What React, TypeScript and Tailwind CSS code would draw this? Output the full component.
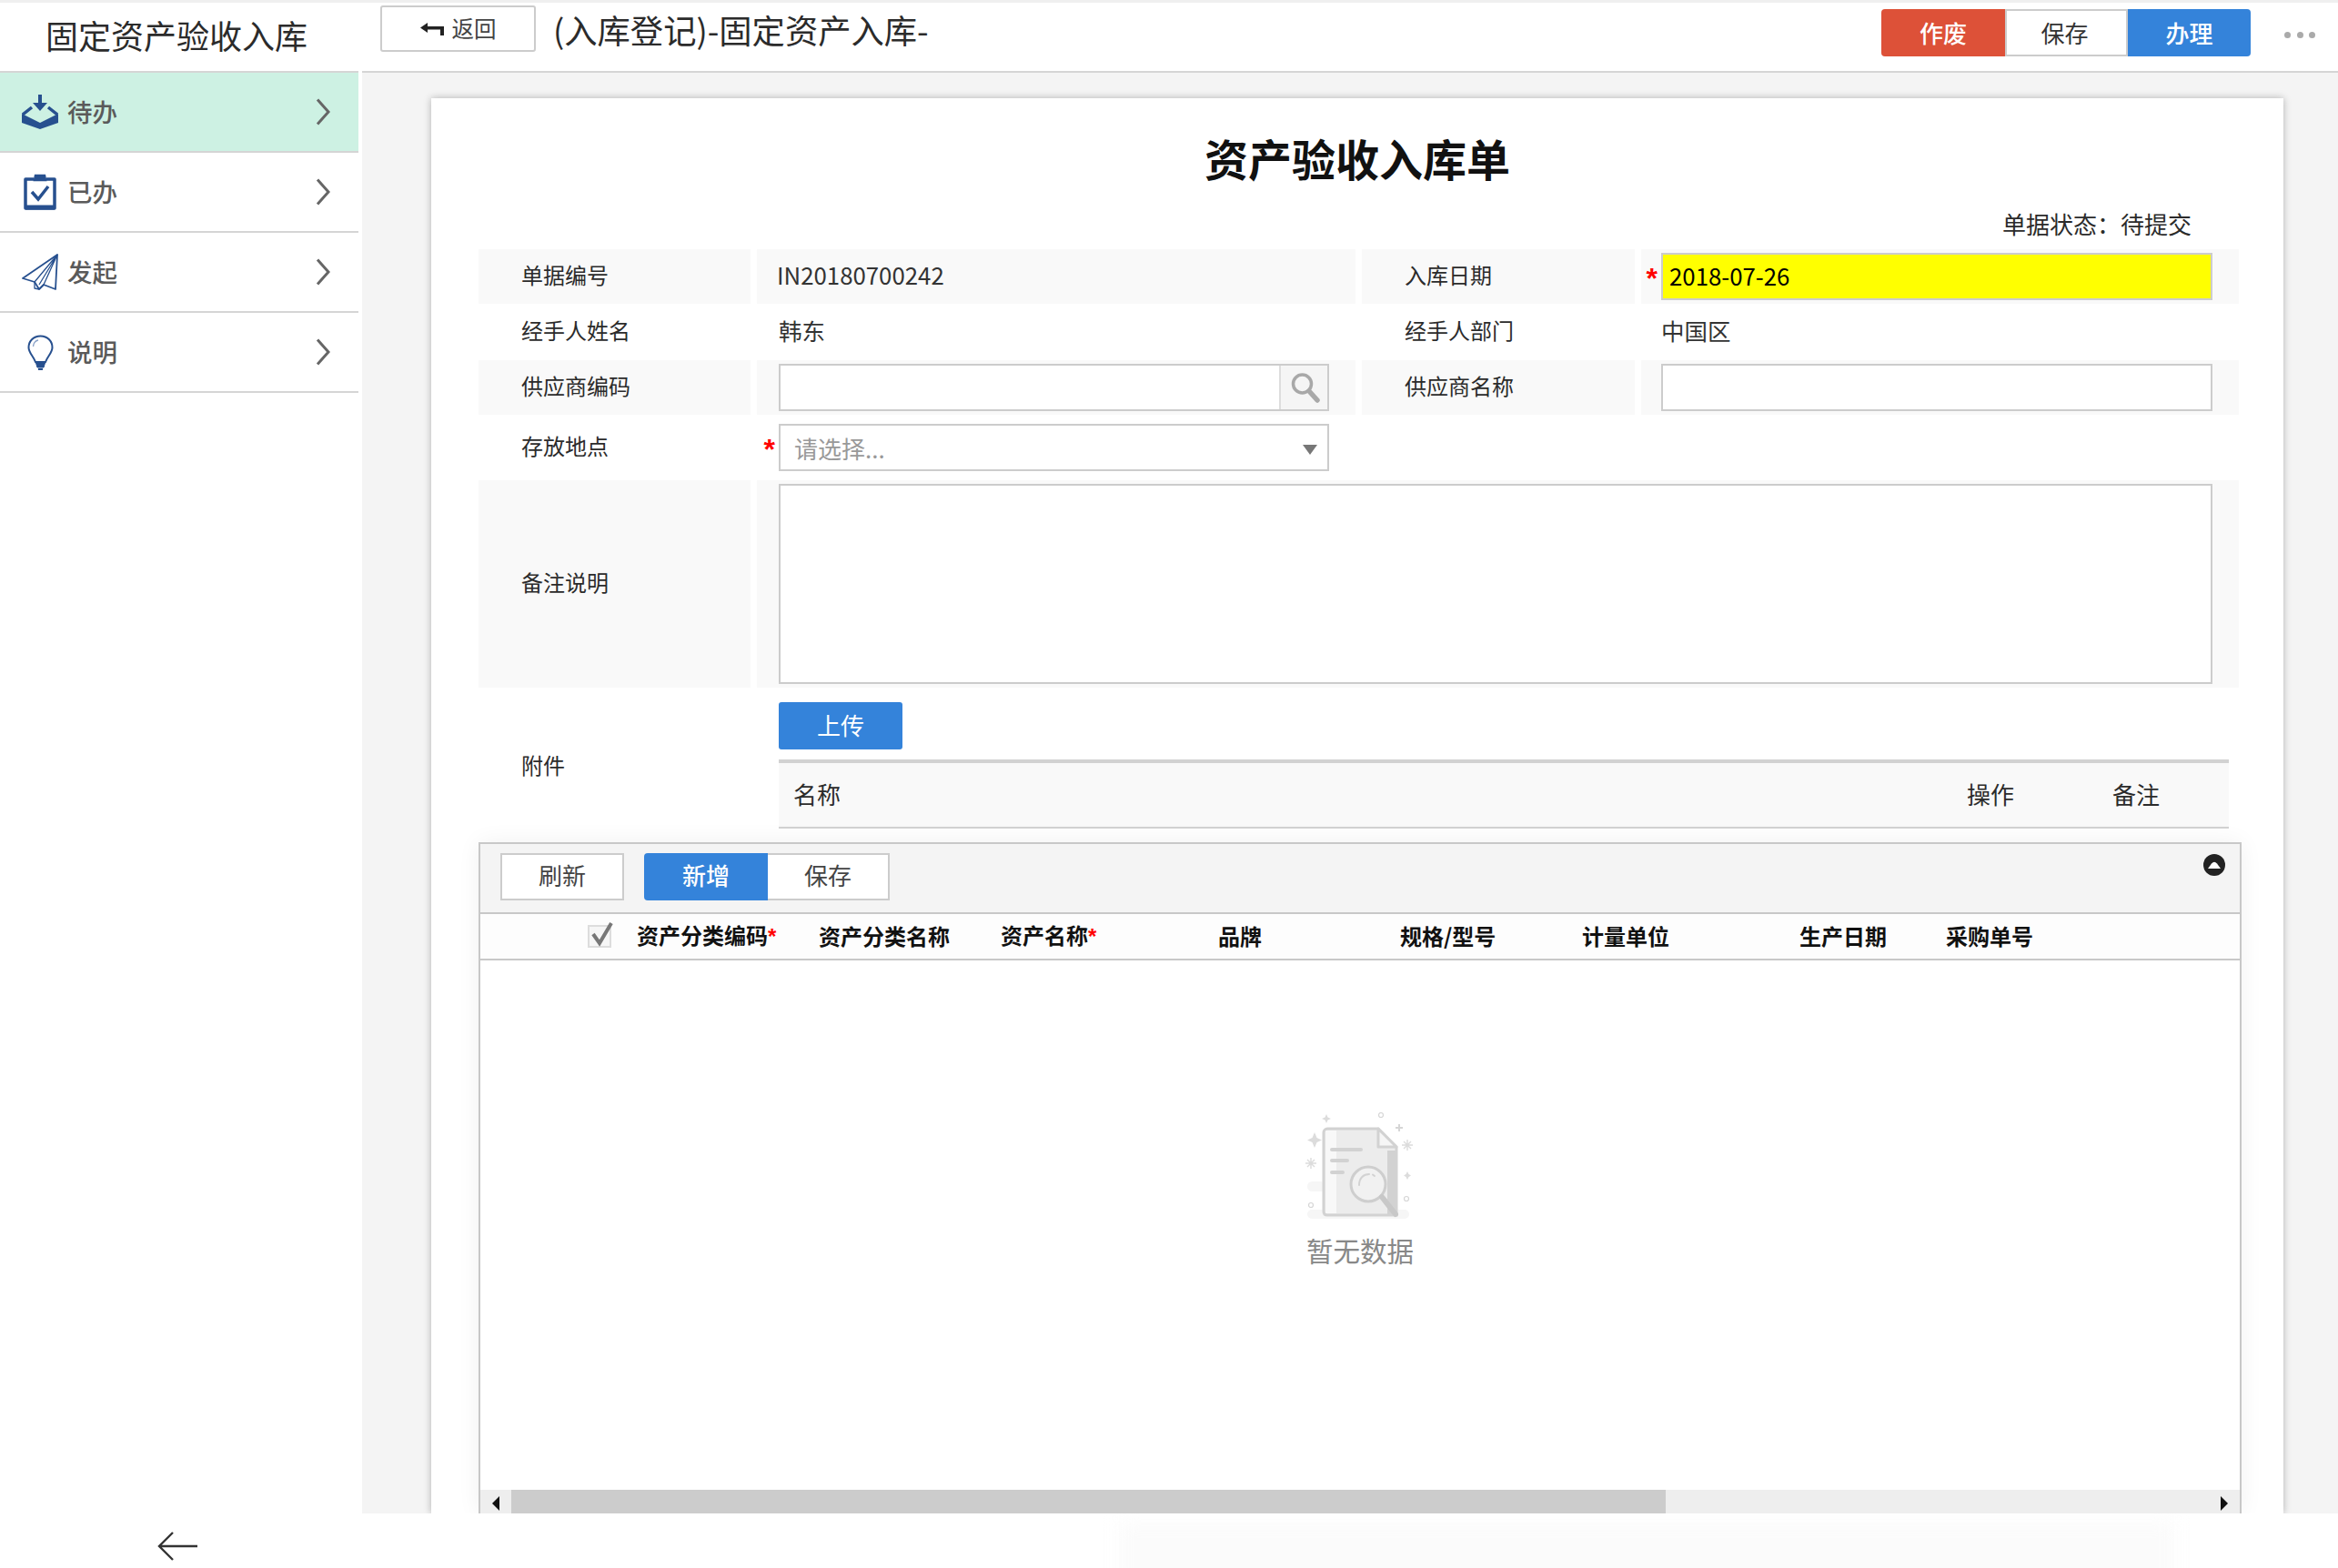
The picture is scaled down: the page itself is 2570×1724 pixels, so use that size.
import React from "react";

const BLUE = "#27508f";

const Chevron = () => (
  <svg width="16" height="30" viewBox="0 0 16 30" fill="none" className="ml-auto mr-[31px]">
    <polyline points="2,1.500 14,15 2,28.500" stroke="#666" strokeWidth="3" />
  </svg>
);

const InboxIcon = () => (
  <svg width="40" height="38" viewBox="0 0 40 38" fill="none">
    <path d="M18 0h4v9h6l-8 9-8-9h6z" fill={BLUE} />
    <path d="M0 21L20 31L40 21V31L20 38L0 31Z" fill={BLUE} />
    <path d="M1 22L11 14M39 22L29 14" stroke={BLUE} strokeWidth="3.500" />
  </svg>
);
const ClipIcon = () => (
  <svg width="36" height="40" viewBox="0 0 36 40" fill="none">
    <path d="M11 6H2V38H34V6H25" stroke={BLUE} strokeWidth="3.500" strokeLinejoin="round" />
    <path d="M2 37H34" stroke={BLUE} strokeWidth="5" />
    <path d="M12 7L13 2H23L24 7Z" fill={BLUE} stroke={BLUE} strokeWidth="2.500" />
    <path d="M9 20L16 28L27 14" stroke={BLUE} strokeWidth="3.500" />
  </svg>
);
const PlaneIcon = () => (
  <svg width="40" height="40" viewBox="0 0 40 40" fill="none" stroke={BLUE} strokeWidth="1.800" strokeLinejoin="round">
    <path d="M39 1L1 27L14 31L19 39L24 34L37 39Z" />
    <path d="M39 1L14 31L14 38L19 39M39 1L24 34M39 1L19 34M24 34L19 39" strokeWidth="1.300" />
  </svg>
);
const BulbIcon = () => (
  <svg width="29" height="39" viewBox="0 0 29 39" fill="none" stroke={BLUE}>
    <path d="M14.500 1.500C6.500 1.500 1.500 7.500 1.500 14C1.500 20 6.500 23 9 30H20C22.500 23 27.500 20 27.500 14C27.500 7.500 22.500 1.500 14.500 1.500Z" strokeWidth="2" />
    <path d="M6.500 13C6.500 9.500 9 6.500 12 6" strokeWidth="1.400" stroke="#8aa2c8" />
    <path d="M9.500 31H19.500L18 36H11Z" fill={BLUE} strokeWidth="1" />
    <path d="M12 38H17" strokeWidth="2" />
  </svg>
);

const MENU = [
  { label: "待办", icon: <InboxIcon /> },
  { label: "已办", icon: <ClipIcon /> },
  { label: "发起", icon: <PlaneIcon /> },
  { label: "说明", icon: <BulbIcon /> },
];

const Label = ({ children, shaded }: { children: React.ReactNode; shaded?: boolean }) => (
  <div className={`flex items-center pl-[47px] pb-[4px] text-[24px] text-[#2b2b2b] ${shaded ? "bg-[#f9f9f9]" : ""}`}>{children}</div>
);

const Star = ({ show, wide }: { show?: boolean; wide?: boolean }) => (
  <span className={`shrink-0 text-right text-[32px] leading-none h-[24px] -mt-[5px] font-bold text-[#f00] font-['Liberation_Sans',sans-serif] ${wide ? "w-[24px] pr-[4px]" : "w-[22px] pr-[4px]"}`}>
    {show ? "*" : ""}
  </span>
);

const EmptyIcon = () => (
  <svg width="120" height="120" viewBox="0 0 120 120" fill="none">
    <rect x="2" y="107" width="112" height="10" rx="5" fill="#f6f6f6" />
    <rect x="2" y="76" width="20" height="11" rx="5.500" fill="#f6f6f6" />
    <path d="M24 18H80L100 38V113H24C21 113 20 111 20 109V22C20 20 22 18 24 18Z" fill="#ececec" stroke="#d2d2d2" strokeWidth="3" />
    <path d="M22 20H34V111H22Z" fill="#f8f8f8" />
    <path d="M90 42H99V112H90Z" fill="#d2d2d2" />
    <path d="M80 18V38H100Z" fill="#f6f6f6" stroke="#d2d2d2" strokeWidth="3" strokeLinejoin="round" />
    <rect x="27" y="39" width="36" height="4" rx="2" fill="#d2d2d2" />
    <rect x="27" y="51" width="21" height="4" rx="2" fill="#d2d2d2" />
    <rect x="27" y="64" width="16" height="4" rx="2" fill="#d2d2d2" />
    <circle cx="69" cy="79" r="19" fill="#f1f1f1" stroke="#cecece" strokeWidth="3" />
    <path d="M59 80C59 72 64 68 70 68M74 68.500L76 70" stroke="#d2d2d2" strokeWidth="2" strokeLinecap="round" />
    <path d="M84 93L99 112" stroke="#c8c8c8" strokeWidth="6" strokeLinecap="round" />
    <path d="M8 22L10.500 28L16 30.500L10.500 33L8 39L5.500 33L0 30.500L5.500 28Z" transform="translate(2 0)" fill="#dcdcdc" />
    <path d="M23 2L24.500 5.500L28 7L24.500 8.500L23 12L21.500 8.500L18 7L21.500 5.500Z" fill="#dcdcdc" />
    <path d="M103 13V21M99 17H107" stroke="#d6d6d6" strokeWidth="2" />
    <path d="M112 65L113.500 68L116 69.500L113.500 71L112 74L110.500 71L108 69.500L110.500 68Z" fill="#dcdcdc" />
    <path d="M112 30V42M106 36H118M108 32L116 40M116 32L108 40" stroke="#dcdcdc" strokeWidth="1.400" />
    <path d="M6 50V62M0 56H12M2 52L10 60M10 52L2 60" stroke="#dcdcdc" strokeWidth="1.400" />
    <circle cx="83" cy="3" r="2.500" stroke="#d6d6d6" strokeWidth="1.200" />
    <circle cx="111" cy="95" r="2.500" stroke="#d6d6d6" strokeWidth="1.200" />
    <circle cx="6" cy="102" r="2.500" stroke="#d6d6d6" strokeWidth="1.200" />
  </svg>
);

const COLS: { t: string; w: string; star?: boolean }[] = [
  { t: "资产分类编码", w: "w-[200px]", star: true },
  { t: "资产分类名称", w: "w-[200px]" },
  { t: "资产名称", w: "w-[239px]", star: true },
  { t: "品牌", w: "w-[200px]" },
  { t: "规格/型号", w: "w-[200px]" },
  { t: "计量单位", w: "w-[239px]" },
  { t: "生产日期", w: "w-[161px]" },
  { t: "采购单号", w: "w-[200px]" },
];

export default function App() {
  const gridRow = "grid grid-cols-[299px_658px_300px_657px] gap-x-[7px]";
  return (
    <div className="w-[2570px] h-[1724px] overflow-hidden bg-white flex flex-col text-[#333] font-['Noto_Sans_CJK_SC','Noto_Sans',sans-serif]">
      {/* header */}
      <header className="h-[78px] shrink-0 flex items-start border-t-[3px] border-[#efefef] bg-white">
        <div className="w-[394px] h-full flex items-center pl-[50px] pb-[6px] text-[36px] text-[#2b2b2b] leading-none">固定资产验收入库</div>
        <button className="ml-[24px] mt-[3px] w-[171px] h-[51px] flex items-center justify-center gap-[9px] rounded-[3px] border-2 border-[#ccc] bg-white text-[24.500px] text-[#444]">
          <svg width="26" height="14" viewBox="0 0 26 14">
            <path d="M0 5.500L8 0V4H26V14H22V7.500H8V11Z" fill="#222" />
          </svg>
          <span>返回</span>
        </button>
        <div className="ml-[19px] mt-[7px] text-[36.300px] leading-[44px] text-[#2b2b2b] whitespace-nowrap">(入库登记)-固定资产入库-</div>
        <div className="ml-auto mt-[7px] flex h-[52px] text-[26px] leading-none">
          <button className="w-[136px] rounded-l-[4px] bg-[#dd5138] text-white font-medium flex items-center justify-center">作废</button>
          <button className="w-[135px] border-2 border-[#ccc] bg-white text-[#333] flex items-center justify-center pr-[4px]">保存</button>
          <button className="w-[135px] rounded-r-[4px] bg-[#3483da] text-white font-medium flex items-center justify-center">办理</button>
        </div>
        <div className="ml-[37px] mr-[25px] mt-[32px] flex gap-[6.500px]">
          <span className="w-[7px] h-[7px] rounded-full bg-[#aaa]" />
          <span className="w-[7px] h-[7px] rounded-full bg-[#aaa]" />
          <span className="w-[7px] h-[7px] rounded-full bg-[#aaa]" />
        </div>
      </header>

      <div className="h-[1586px] shrink-0 flex">
        {/* sidebar */}
        <aside className="w-[394px] shrink-0 border-t-2 border-[#d5d5d5] bg-white">
          {MENU.map((m, i) => (
            <div key={m.label} className={`h-[88px] flex items-center border-b-2 border-[#d5d5d5] ${i === 0 ? "bg-[#cdf1e3]" : "bg-white"}`}>
              <div className="w-[88px] shrink-0 flex justify-center">{m.icon}</div>
              <span className="-ml-[14px] text-[27.500px] font-medium leading-none text-[#5a5a5a]">{m.label}</span>
              <Chevron />
            </div>
          ))}
        </aside>

        {/* main */}
        <main className="ml-[4px] flex-1 min-w-0 border-t-2 border-[#d5d5d5] bg-[#f4f4f4] pt-[28px] pl-[76px] overflow-hidden">
          <section className="w-[2036px] h-full bg-white shadow-[0_0_8px_rgba(0,0,0,0.28)] flex flex-col pl-[52px] overflow-hidden">
            <h1 className="mt-[41px] mb-[3px] h-[48px] text-center text-[48px] leading-[48px] font-bold text-[#111] -ml-[52px]">资产验收入库单</h1>
            <div className="mt-[32px] mb-[14px] h-[28px] pr-[101px] flex justify-end text-[26px] leading-[28px] text-[#2b2b2b]">
              <span>单据状态：</span>
              <span>待提交</span>
            </div>

            <div className={`${gridRow} h-[60px]`}>
              <Label shaded>单据编号</Label>
              <div className="bg-[#f9f9f9] flex items-center pl-[22px] pb-[3px] text-[25.800px]">IN20180700242</div>
              <Label shaded>入库日期</Label>
              <div className="bg-[#f9f9f9] flex items-center">
                <Star show />
                <div className="w-[606px] h-[52px] border-2 border-[#ccc] bg-[#ffff00] flex items-center pl-[7px] pb-[2px] text-[25.800px] text-black">2018-07-26</div>
              </div>
            </div>

            <div className={`${gridRow} h-[62px]`}>
              <Label>经手人姓名</Label>
              <div className="flex items-center pl-[24px] pb-[3px] text-[25.500px]">韩东</div>
              <Label>经手人部门</Label>
              <div className="flex items-center pl-[22px] pb-[3px] text-[25.500px]">中国区</div>
            </div>

            <div className={`${gridRow} h-[60px]`}>
              <Label shaded>供应商编码</Label>
              <div className="bg-[#f9f9f9] flex items-center pl-[24px]">
                <div className="w-[605px] h-[52px] border-2 border-[#ccc] bg-white flex justify-end">
                  <div className="w-[53px] h-full border-l-2 border-[#ddd] bg-[#f5f5f5] flex items-center justify-center pl-[2px]">
                    <svg width="34" height="34" viewBox="0 0 34 34" fill="none" stroke="#a8a8a8">
                      <circle cx="13.500" cy="13" r="10" strokeWidth="3.500" />
                      <path d="M21 21L30 31" strokeWidth="5.500" strokeLinecap="round" />
                    </svg>
                  </div>
                </div>
              </div>
              <Label shaded>供应商名称</Label>
              <div className="bg-[#f9f9f9] flex items-center pl-[22px]">
                <div className="w-[606px] h-[52px] border-2 border-[#ccc] bg-white" />
              </div>
            </div>

            <div className={`${gridRow} h-[72px]`}>
              <Label>存放地点</Label>
              <div className="flex items-center">
                <Star show wide />
                <div className="w-[605px] h-[52px] border-2 border-[#ccc] bg-white flex items-center pl-[15px] pr-[11px] text-[26px] text-[#999]">
                  <span>请选择...</span>
                  <svg width="16" height="11" viewBox="0 0 16 11" className="ml-auto mt-[4px]">
                    <path d="M0 0H16L8 11Z" fill="#777" />
                  </svg>
                </div>
              </div>
            </div>

            <div className={`${gridRow} h-[228px]`}>
              <Label shaded>备注说明</Label>
              <div className="col-span-3 bg-[#f9f9f9] pl-[24px] pt-[4px]">
                <div className="w-[1576px] h-[220px] border-2 border-[#ccc] bg-white" />
              </div>
            </div>

            <div className="h-[155px] flex">
              <div className="w-[330px] shrink-0 pl-[47px] pt-[71px] text-[24px] leading-[28px] text-[#2b2b2b]">附件</div>
              <div className="w-[1594px]">
                <button className="mt-[16px] w-[136px] h-[52px] rounded-[3px] bg-[#3483da] text-white text-[26px] flex items-center justify-center pb-[3px]">上传</button>
                <div className="mt-[11px] h-[76px] border-t-[4px] border-b-2 border-[#d2d2d2] bg-[#f9f9f9] flex items-center pb-[3px] text-[26px] text-[#2b2b2b]">
                  <span className="ml-[16px]">名称</span>
                  <span className="ml-[1238px]">操作</span>
                  <span className="ml-[108px]">备注</span>
                </div>
              </div>
            </div>

            {/* grid panel */}
            <div className="mt-[15px] w-[1938px] flex-1 min-h-0 flex flex-col border-x-2 border-t-2 border-[#c8c8c8] shadow-[0_0_24px_rgba(0,0,0,0.06)]">
              <div className="h-[77px] shrink-0 border-b-2 border-[#c8c8c8] bg-[#f4f4f4] flex items-start pt-[10px] pl-[22px] text-[26px]">
                <button className="w-[136px] h-[52px] border-2 border-[#ccc] bg-white flex items-center justify-center pb-[6px] text-[#444]">刷新</button>
                <button className="ml-[22px] w-[136px] h-[52px] rounded-l-[4px] bg-[#3483da] text-white font-medium flex items-center justify-center pb-[6px]">新增</button>
                <button className="w-[134px] h-[52px] border-2 border-l-0 border-[#ccc] bg-white flex items-center justify-center pb-[6px] text-[#444]">保存</button>
                <div className="ml-auto mr-[16px] mt-[1px] w-[24px] h-[24px] rounded-full bg-[#222] flex items-center justify-center">
                  <svg width="14" height="8" viewBox="0 0 14 8">
                    <path d="M0 8L4 2.500Q7 -1 10 2.500L14 8Z" fill="#fff" />
                  </svg>
                </div>
              </div>
              <div className="h-[51px] shrink-0 border-b-2 border-[#c8c8c8] bg-[#fdfdfd] flex items-center pb-[2px] text-[24px] font-bold text-[#111]">
                <div className="w-[172px] shrink-0 pl-[118px] pt-[2px]">
                  <div className="w-[26px] h-[25px] border-2 border-[#ddd] bg-[#f6f6f6] flex items-center justify-center overflow-visible">
                    <svg width="30" height="30" viewBox="0 0 30 30" fill="none" className="shrink-0 -mt-[6px] ml-[4px]">
                      <path d="M6 15L13 25L26 3" stroke="#777" strokeWidth="4" />
                    </svg>
                  </div>
                </div>
                {COLS.map((c) => (
                  <div key={c.t} className={`${c.w} shrink-0 whitespace-nowrap`}>
                    {c.t}
                    {c.star && <span className="text-[#f00] font-bold font-['Liberation_Sans',sans-serif]">*</span>}
                  </div>
                ))}
              </div>
              <div className="flex-1 min-h-0 bg-white flex flex-col items-center pt-[167px]">
                <EmptyIcon />
                <div className="mt-[11px] text-[29.500px] leading-[40px] text-[#888]">暂无数据</div>
              </div>
              <div className="h-[26px] shrink-0 bg-[#eee] flex">
                <div className="w-[34px] shrink-0 pl-[13px] pt-[7px]">
                  <svg width="8" height="16" viewBox="0 0 8 16"><path d="M8 0V16L0 8Z" fill="#111" /></svg>
                </div>
                <div className="w-[1269px] shrink-0 bg-[#ccc]" />
                <div className="flex-1 flex justify-end pr-[13px] pt-[7px]">
                  <svg width="8" height="16" viewBox="0 0 8 16"><path d="M0 0V16L8 8Z" fill="#111" /></svg>
                </div>
              </div>
            </div>
          </section>
        </main>
      </div>

      {/* footer */}
      <footer className="h-[60px] shrink-0 flex items-start bg-white overflow-hidden">
        <svg width="44" height="32" viewBox="0 0 44 32" fill="none" className="ml-[173px] mt-[20px]">
          <path d="M44 16H2M17 1L2 16L17 31" stroke="#333" strokeWidth="2.400" />
        </svg>
        <div className="ml-auto mr-[180px] mt-[10px] w-[1160px] h-[70px] bg-[#fbfbfb] blur-[10px]" />
      </footer>
    </div>
  );
}
